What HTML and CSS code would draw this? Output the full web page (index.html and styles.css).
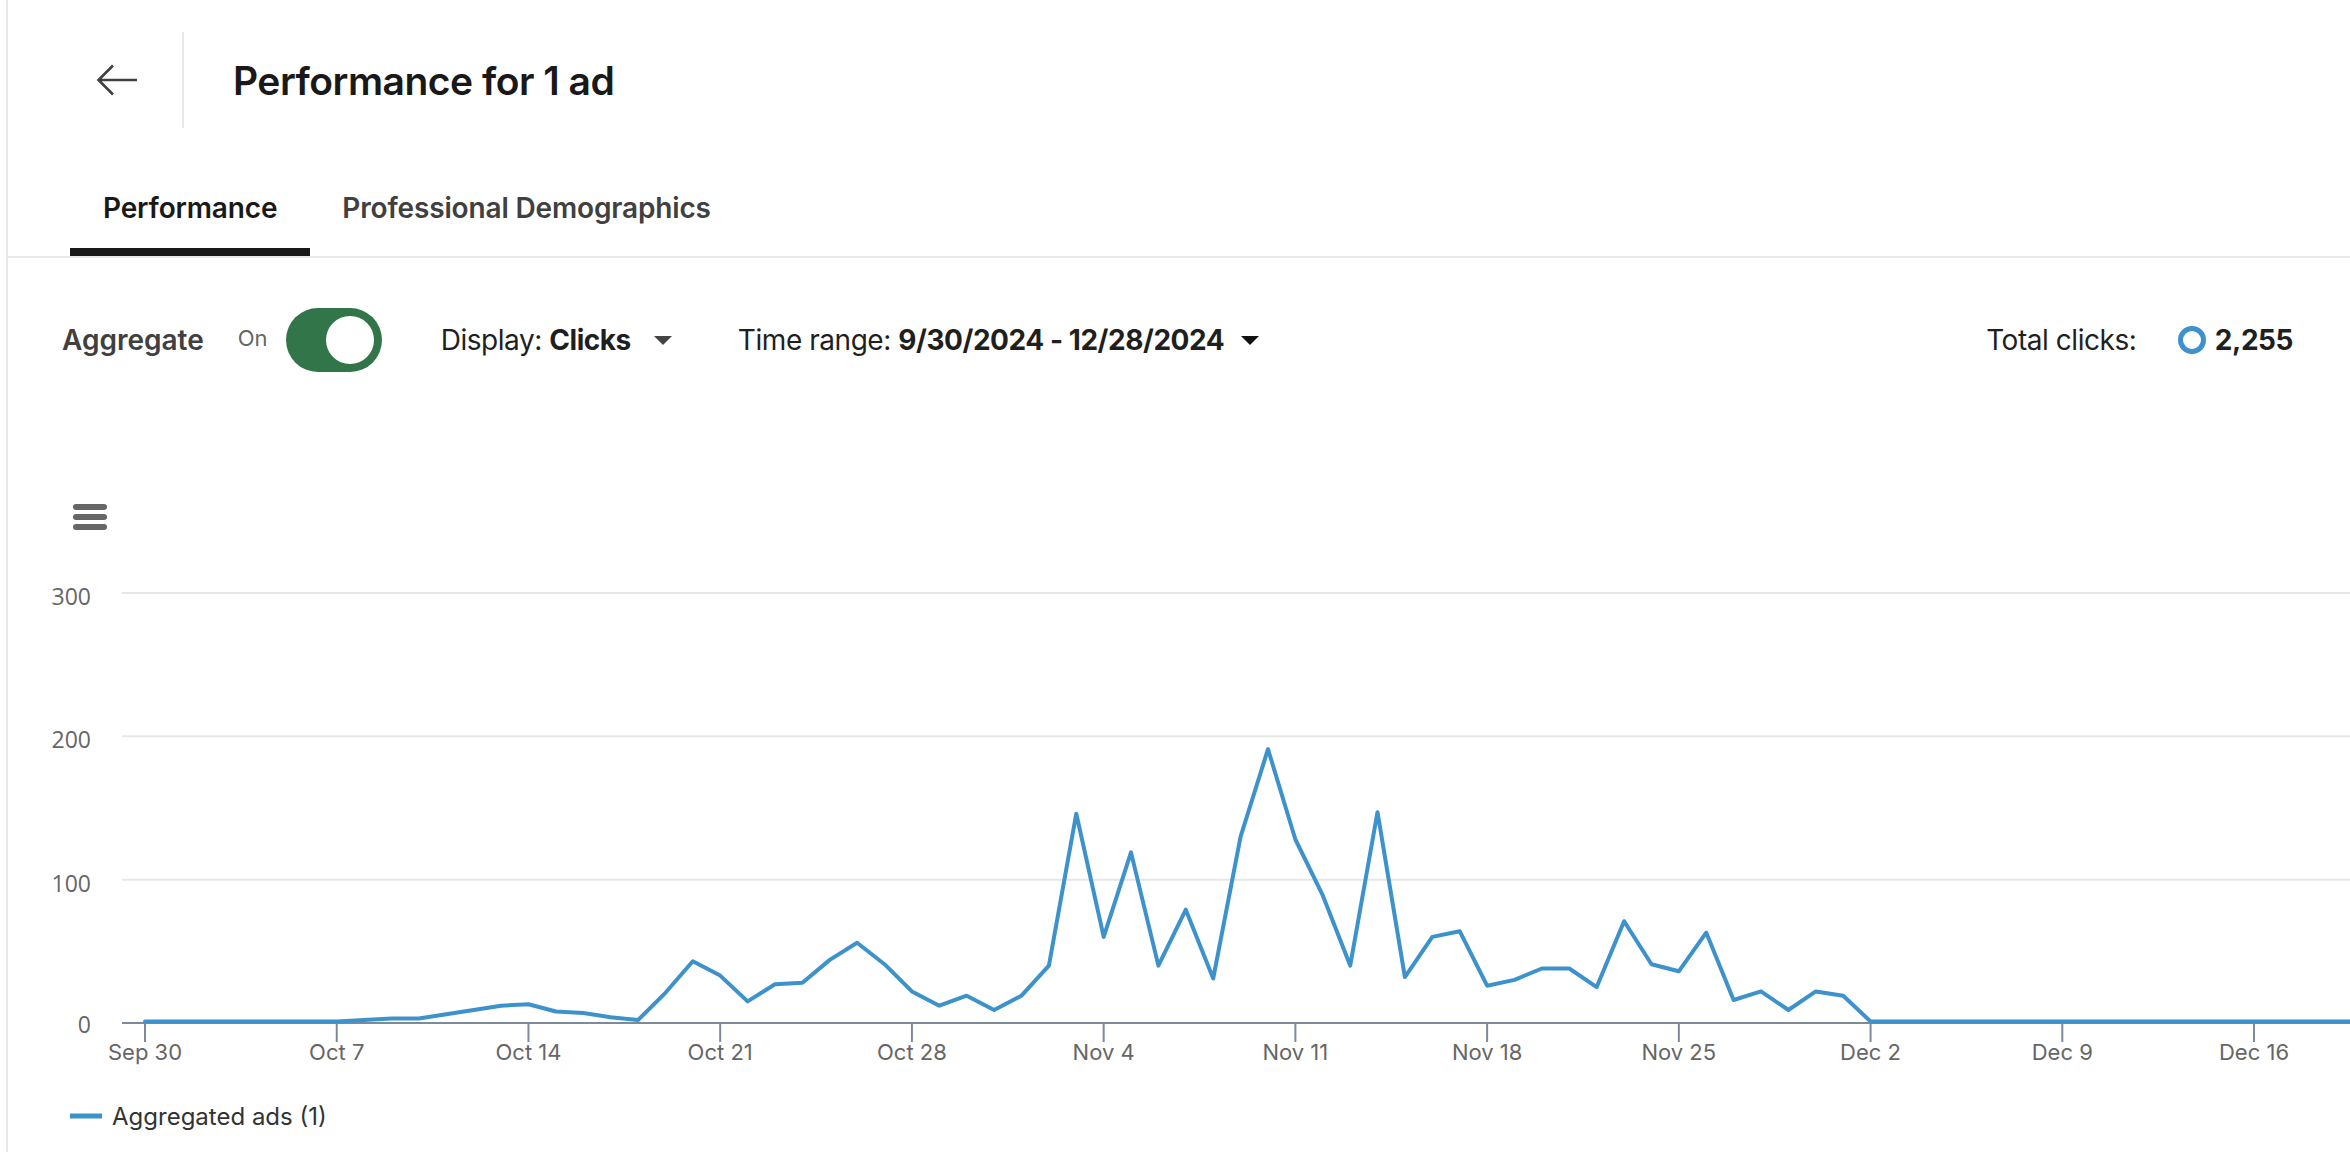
FILE: index.html
```html
<!DOCTYPE html>
<html lang="en">
<head>
	<meta charset="UTF-8">
	<meta name="viewport" content="width=device-width, initial-scale=1.0">
	<title>Performance for 1 ad</title>

	<link rel="stylesheet" href="styles.css">
</head>
<body>
	<div class="page">

		<header class="header">
			<div class="back">
				<svg viewBox="0 0 42 32" fill="none" stroke="#404040" stroke-width="2.6">
					<path d="M41 16H2.5M17 1.5L2.5 16L17 30.5"/>
				</svg>
			</div>
			<h1 class="title">Performance for 1 ad</h1>
		</header>

		<nav class="tabs">
			<div class="tab active">Performance</div>
			<div class="tab">Professional Demographics</div>
		</nav>

		<div class="controls">
			<span class="aggregate">Aggregate</span>
			<span class="toggle-state">On</span>
			<span class="toggle"><span class="knob"></span></span>
			<div class="dropdown display">Display: <b>Clicks</b><span class="caret"></span></div>
			<div class="dropdown range">Time range: <b>9/30/2024 - 12/28/2024</b><span class="caret dark"></span></div>
			<div class="total">Total clicks: <span class="marker"></span><b>2,255</b></div>
		</div>

		<div class="chart">
			<svg id="chart" width="2342" height="730" viewBox="0 0 2342 730">
				<g fill="#666">
					<rect x="65" y="82" width="34" height="6" rx="3"/>
					<rect x="65" y="92" width="34" height="6" rx="3"/>
					<rect x="65" y="102" width="34" height="6" rx="3"/>
				</g>
				<g stroke="#e6e6e6" stroke-width="2">
					<line x1="114" y1="171" x2="2342" y2="171"/>
					<line x1="114" y1="314.3" x2="2342" y2="314.3"/>
					<line x1="114" y1="457.7" x2="2342" y2="457.7"/>
				</g>
				<g class="y-labels" text-anchor="end">
					<text x="83" y="183">300</text>
					<text x="83" y="326">200</text>
					<text x="83" y="470">100</text>
					<text x="83" y="611">0</text>
				</g>
				<g id="ticks" stroke="#7c8a99" stroke-width="2"></g>
				<g id="x-labels" class="x-labels" text-anchor="middle"></g>
				<line x1="114" y1="601" x2="2342" y2="601" stroke="#7c8a99" stroke-width="2"/>
				<polyline id="series" fill="none" stroke="#3e92cc" stroke-width="4" stroke-linejoin="round" stroke-linecap="round"/>
				<line x1="62" y1="694" x2="94" y2="694" stroke="#3e92cc" stroke-width="5"/>
				<text class="legend" x="104" y="703">Aggregated ads (1)</text>
			</svg>
		</div>

	</div>

	<script>
		const clicks = [
			0, 0, 0, 0, 0, 0, 0, 0, 1, 2, 2, 5, 8, 11, 12, 7, 6, 3, 1, 20, 42, 32,
			14, 26, 27, 43, 55, 40, 21, 11, 18, 8, 18, 39,
			145, 59, 118, 39, 78, 30, 129, 190, 127, 88, 39, 146,
			31, 59, 63, 25, 29, 37, 37, 24, 70, 40, 35, 62, 15, 21, 8, 21, 18, 0
		]
		while (clicks.length < 90) clicks.push(0)

		const ns = 'http://www.w3.org/2000/svg'
		const left = 137
		const day = 27.39
		const zero = 599.5
		const perClick = 1.4333

		document.getElementById('series').setAttribute('points', clicks
			.map((value, i) => `${(left + i * day).toFixed(1)},${(zero - value * perClick).toFixed(1)}`)
			.join(' '))

		// only the weeks that fit in the visible plot
		const labels = ['Sep 30', 'Oct 7', 'Oct 14', 'Oct 21', 'Oct 28', 'Nov 4', 'Nov 11',
			'Nov 18', 'Nov 25', 'Dec 2', 'Dec 9', 'Dec 16']
		const ticks = document.getElementById('ticks')
		const xLabels = document.getElementById('x-labels')

		labels.forEach((label, i) => {
			const x = left + i * day * 7
			const tick = document.createElementNS(ns, 'line')
			tick.setAttribute('x1', x)
			tick.setAttribute('x2', x)
			tick.setAttribute('y1', 601)
			tick.setAttribute('y2', 620)
			ticks.appendChild(tick)

			const text = document.createElementNS(ns, 'text')
			text.setAttribute('x', x)
			text.setAttribute('y', 638)
			text.textContent = label
			xLabels.appendChild(text)
		})
	</script>
</body>
</html>
```

FILE: styles.css
```css
body {
	margin: 0;
	background: #fff;
	color: #191919;
	font-family: Inter, "Noto Sans", sans-serif;
	overflow: hidden;
}

.page {
	min-height: 100vh;
	margin-left: 6px;
	border-left: 2px solid #e8e8e8;
}

.header {
	display: flex;
	align-items: center;
	height: 160px;
}

.back {
	display: flex;
	align-items: center;
	height: 96px;
	padding: 0 44px 0 88px;
	border-right: 2px solid #e8e8e8;
}

.back svg {
	display: block;
	width: 42px;
	height: 32px;
}

.title {
	margin: 0 0 0 49px;
	font-size: 39px;
	font-weight: 600;
	letter-spacing: -0.5px;
}

.tabs {
	display: flex;
	height: 96px;
	padding-left: 62px;
	border-bottom: 2px solid #e8e8e8;
}

.tab {
	display: flex;
	align-items: center;
	padding: 0 33px;
	color: #404040;
	font-size: 28px;
	font-weight: 600;
	letter-spacing: -0.15px;
}

.tab + .tab {
	padding-left: 32px;
}

.tab.active {
	color: #191919;
	box-shadow: inset 0 -8px 0 #191919;
}

.controls {
	display: flex;
	align-items: center;
	height: 164px;
	padding: 0 57px 0 54px;
	color: #1f1f1f;
	font-size: 28px;
	letter-spacing: -0.45px;
}

.aggregate {
	color: #404040;
	font-weight: 600;
	letter-spacing: 0;
}

.toggle-state {
	margin: -4px 0 0 34px;
	color: #666;
	font-size: 22px;
	letter-spacing: 0;
}

.toggle {
	display: flex;
	justify-content: flex-end;
	align-items: center;
	box-sizing: border-box;
	width: 96px;
	height: 64px;
	margin-left: 18px;
	padding: 0 8px;
	border-radius: 32px;
	background: #317548;
}

.knob {
	width: 48px;
	height: 48px;
	border-radius: 50%;
	background: #fff;
}

.dropdown {
	display: flex;
	align-items: center;
	white-space: pre;
}

.dropdown b,
.total b {
	font-weight: 700;
}

.display {
	margin-left: 59px;
}

.range {
	margin-left: 66px;
}

.caret {
	width: 0;
	height: 0;
	margin-left: 23px;
	border-left: 9px solid transparent;
	border-right: 9px solid transparent;
	border-top: 9px solid #444;
}

.caret.dark {
	margin-left: 17px;
	border-top-color: #111;
}

.total {
	display: flex;
	align-items: center;
	margin-left: auto;
	white-space: pre;
}

.marker {
	box-sizing: border-box;
	width: 28px;
	height: 28px;
	margin: 0 9px 0 34px;
	border: 5px solid #3e92cc;
	border-radius: 50%;
}

.chart svg {
	display: block;
}

.y-labels {
	fill: #666;
	font-family: "Open Sans", sans-serif;
	font-size: 23px;
}

.x-labels {
	fill: #666;
	font-size: 22px;
}

.legend {
	fill: #333;
	font-size: 24px;
}
```
